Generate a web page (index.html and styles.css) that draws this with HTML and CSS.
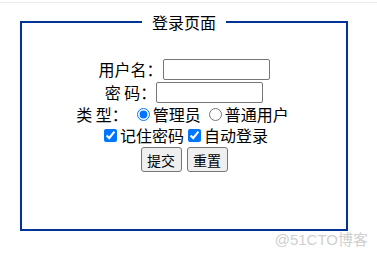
FILE: index.html
```html
<!DOCTYPE html>
<html lang="zh-CN">
<head>
<meta charset="utf-8">
<title>登录页面</title>
<link rel="stylesheet" href="styles.css">
</head>
<body>
<div class="topline"></div>
<form class="login">
  <fieldset class="box">
    <legend class="title">登录页面</legend>
    <div class="content">
      <div class="row r1">
        <span class="lbl">用户名：</span>
        <input class="txt" type="text">
      </div>
      <div class="row r2">
        <span class="lbl">密 码：</span>
        <input class="txt" type="password">
      </div>
      <div class="row r3">
        <span class="lbl">类 型：</span>
        <input class="radio first" type="radio" name="t" checked>
        <span>管理员</span>
        <input class="radio second" type="radio" name="t">
        <span>普通用户</span>
      </div>
      <div class="row r4">
        <input class="chk" type="checkbox" checked>
        <span>记住密码</span>
        <input class="chk chk2" type="checkbox" checked>
        <span>自动登录</span>
      </div>
      <div class="row r5">
        <button class="btn" type="button">提交</button>
        <button class="btn" type="button">重置</button>
      </div>
    </div>
  </fieldset>
</form>
<div class="watermark">@51CTO博客</div>
</body>
</html>
```
FILE: styles.css
```css
html, body {
  margin: 0;
  padding: 0;
  background: #fff;
}
body {
  width: 377px;
  height: 255px;
  overflow: hidden;
  position: relative;
  font-family: "Noto Sans CJK SC", "Noto Sans", sans-serif;
  font-size: 16px;
  color: #000;
}
.topline {
  margin-top: 2px;
  height: 1px;
  background: #ebebeb;
}
.login {
  margin: 9px 0 0 20px;
}
.box {
  box-sizing: border-box;
  width: 328px;
  margin: 0;
  padding: 0;
  border: 2px solid #003399;
  min-inline-size: 0;
}
.title {
  margin: 0 auto;
  padding: 0 10px;
  font-size: 16px;
  line-height: 20px;
  height: 20px;
}
.content {
  box-sizing: border-box;
  height: 197px;
  padding-top: 26px;
}
.row {
  display: flex;
  justify-content: center;
  align-items: center;
  line-height: 19px;
  white-space: pre;
}
.r1 { height: 23px; }
.r2 { height: 23px; }
.r3 { height: 21px; margin-left: -3px; }
.r4 { height: 20px; }
.r5 { height: 27px; gap: 5px; padding-top: 1px; }
.txt {
  box-sizing: border-box;
  width: 107px;
  height: 21px;
  margin: 0;
  padding: 1px 2px;
  border: 1px solid #767676;
  border-radius: 2px;
  font-size: 13px;
}
.radio {
  width: 13px;
  height: 13px;
  margin: 0 3px 0 9px;
}
.radio.second { margin-left: 8px; }
.chk {
  width: 13px;
  height: 13px;
  margin: 0 3px 0 4px;
}
.chk.chk2 { margin-left: 4px; }
.btn {
  box-sizing: border-box;
  width: 41px;
  height: 25px;
  margin: 0;
  padding: 0;
  font-family: "Noto Sans CJK SC", sans-serif;
  font-size: 14px;
  line-height: 20px;
  color: #000;
  background: #efefef;
  border: 1px solid #767676;
  border-radius: 3px;
}
.watermark {
  position: absolute;
  right: 9px;
  top: 230px;
  font-family: "Liberation Sans", "Noto Sans CJK SC", sans-serif;
  font-size: 15px;
  line-height: 20px;
  color: #cfcfcf;
}
```
